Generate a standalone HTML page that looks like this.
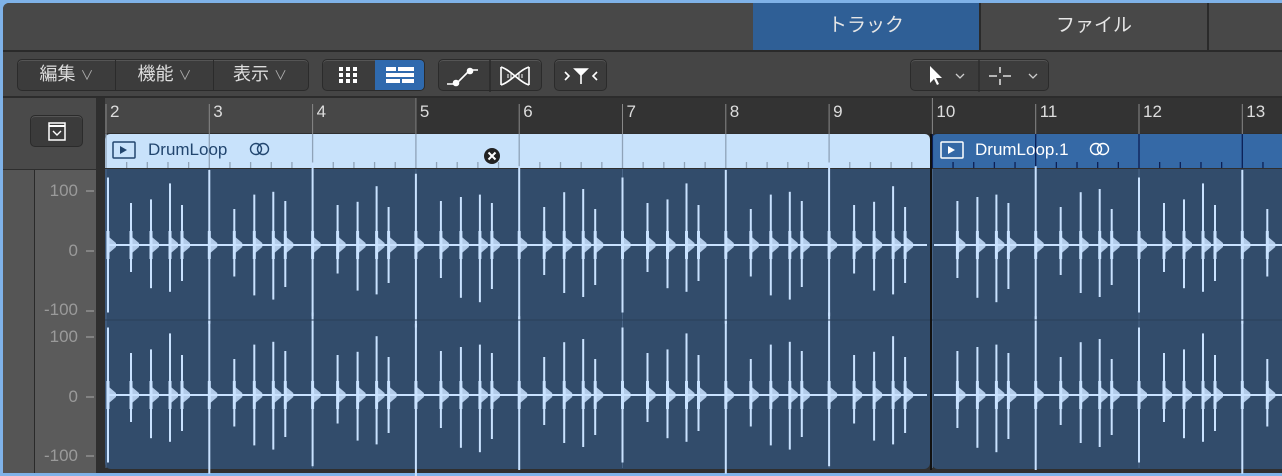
<!DOCTYPE html>
<html><head><meta charset="utf-8"><style>
*{margin:0;padding:0;box-sizing:border-box}
body{width:1282px;height:476px;background:#7fb2e8;overflow:hidden;position:relative;font-family:"Liberation Sans","Noto Sans CJK JP",sans-serif}
.a{position:absolute}
.frame{left:3px;top:3px;width:1279px;height:470px;background:#464646;border-radius:6px 0 0 6px;overflow:hidden}
.tab{top:3px;height:47px;color:#e6e6e6;font-size:19px;text-align:center;line-height:46px;border-right:2px solid #2a2a2a}
.btn{background:#3c3c3c;border:1px solid #2b2b2b;border-radius:5px;color:#ddd;font-size:18px;box-shadow:0 1px 0 #555 inset}
.seg{display:inline-block;height:100%;text-align:center;line-height:29px;border-right:1px solid #2b2b2b}
.lab{color:#9a9a9a;font-size:17px;text-align:right;width:44px}
</style></head><body>
<div class="a frame"></div>
<div class="a" style="left:3px;top:3px;width:1279px;height:47px;background:#484848;border-radius:6px 0 0 0"></div>
<div class="a tab" style="left:753px;width:228px;background:#2f5f96">トラック</div>
<div class="a tab" style="left:981px;width:228px;background:#484848">ファイル</div>
<div class="a" style="left:3px;top:50px;width:1279px;height:2px;background:#2a2a2a"></div>
<div class="a" style="left:3px;top:52px;width:1279px;height:45px;background:#454545"></div>
<div class="a btn" style="left:17px;top:59px;width:292px;height:32px">
 <span class="seg" style="width:98px">編集 <small style="font-size:13px;color:#aaa">∨</small></span><span class="seg" style="width:98px">機能 <small style="font-size:13px;color:#aaa">∨</small></span><span class="seg" style="width:92px;border:none">表示 <small style="font-size:13px;color:#aaa">∨</small></span></div>
<div class="a btn" style="left:322px;top:59px;width:103px;height:32px;overflow:hidden">
 <svg class="a" style="left:16px;top:7px" width="20" height="18"><g fill="#fff"><rect x="0" y="0" width="4" height="4"/><rect x="7" y="0" width="4" height="4"/><rect x="14" y="0" width="4" height="4"/><rect x="0" y="6" width="4" height="4"/><rect x="7" y="6" width="4" height="4"/><rect x="14" y="6" width="4" height="4"/><rect x="0" y="12" width="4" height="4"/><rect x="7" y="12" width="4" height="4"/><rect x="14" y="12" width="4" height="4"/></g></svg>
 <div class="a" style="left:52px;top:0;width:51px;height:32px;background:#2f6aae"></div>
 <svg class="a" style="left:63px;top:7px" width="30" height="18"><g fill="#fff"><rect x="0" y="0" width="10" height="4"/><rect x="12" y="0" width="16" height="4"/><rect x="0" y="6" width="28" height="4"/><rect x="0" y="12" width="14" height="4"/><rect x="16" y="12" width="12" height="4"/></g></svg>
</div>
<div class="a btn" style="left:438px;top:59px;width:104px;height:32px">
 <svg class="a" style="left:0;top:0" width="104" height="32"><g stroke="#fff" stroke-width="1.6" fill="none"><path d="M8 24h7M19 22l10-10M33 10h6"/><circle cx="17" cy="23" r="2.5" fill="#fff"/><circle cx="31" cy="11" r="2.5" fill="#fff"/><path d="M51 0v32" stroke="#2b2b2b"/><path d="M62 7v18M90 7v18M62 7c10 3 18 15 28 18M62 25c10-3 18-15 28-18"/><path d="M69 14v4M72 12v8M80 12v8M83 14v4" stroke-width="1"/></g></svg>
</div>
<div class="a btn" style="left:554px;top:59px;width:53px;height:32px">
 <svg class="a" style="left:0;top:0" width="53" height="32"><g stroke="#fff" stroke-width="1.6" fill="none"><path d="M10 12l4 4-4 4M42 12l-4 4 4 4M26 13v11"/><path d="M20 9h12l-6 6z" fill="#fff"/></g></svg>
</div>
<div class="a btn" style="left:910px;top:59px;width:139px;height:32px">
 <svg class="a" style="left:0;top:0" width="139" height="32"><path d="M19 6v17l4-4 3 6 2-1-3-6h6z" fill="#fff"/><g stroke="#ccc" stroke-width="1.3" fill="none"><path d="M45 14l4 4 4-4M118 14l4 4 4-4"/><path d="M68 0v32" stroke="#2b2b2b"/><path d="M78 16h8M92 16h8M89 7v6M89 19v6" stroke="#fff"/></g></svg>
</div>
<div class="a" style="left:3px;top:96px;width:1279px;height:2px;background:#2c2c2c"></div>
<div class="a" style="left:3px;top:98px;width:94px;height:72px;background:#4a4a4a"></div>
<div class="a btn" style="left:30px;top:115px;width:53px;height:32px;background:#3b3b3b">
 <svg class="a" style="left:17px;top:6px" width="18" height="19"><rect x="1" y="1" width="16" height="17" fill="none" stroke="#fff" stroke-width="1.5"/><path d="M1 4h16" stroke="#fff" stroke-width="2"/><path d="M5 9l4 4 4-4" stroke="#fff" stroke-width="1.4" fill="none"/></svg>
</div>
<div class="a" style="left:3px;top:169px;width:94px;height:1px;background:#2e2e2e"></div>
<div class="a" style="left:3px;top:170px;width:31px;height:303px;background:#555"></div>
<div class="a" style="left:34px;top:170px;width:1px;height:303px;background:#2a2a2a"></div>
<div class="a" style="left:35px;top:170px;width:62px;height:303px;background:#5b5b5b"></div>
<div class="a" style="left:96px;top:98px;width:9px;height:375px;background:#2f2f2f"></div>
<div class="a lab" style="left:34px;top:181px">100</div>
<div class="a lab" style="left:34px;top:241px">0</div>
<div class="a lab" style="left:34px;top:300px">-100</div>
<div class="a lab" style="left:34px;top:327px">100</div>
<div class="a lab" style="left:34px;top:387px">0</div>
<div class="a lab" style="left:34px;top:446px">-100</div>
<svg class="a" style="left:86px;top:170px" width="10" height="300"><g stroke="#9a9a9a" stroke-width="1.3"><path d="M0 21h8M0 81h8M0 141h8M0 167h8M0 227h8M0 286h8"/></g></svg>
<div class="a" style="left:105px;top:98px;width:310px;height:35px;background:#474747"></div>
<div class="a" style="left:415px;top:98px;width:867px;height:35px;background:#333"></div>
<div class="a" style="left:105px;top:133px;width:1177px;height:340px;background:#2f2f2f"></div>
<svg id="rul" class="a" style="left:0;top:98px" width="1282" height="36"></svg>
<div class="a" style="left:105px;top:134px;width:825px;height:34px;background:#c8e2fb;border-radius:5px 5px 0 0"></div>
<div class="a" style="left:932px;top:134px;width:350px;height:34px;background:#3569a6;border-radius:5px 0 0 0"></div>
<div class="a" style="left:105px;top:169px;width:825px;height:300px;background:#324c6b;border-radius:0 0 6px 6px"></div>
<div class="a" style="left:932px;top:169px;width:350px;height:300px;background:#324c6b;border-radius:0 0 0 6px"></div>
<svg id="wav" class="a" style="left:0;top:0" width="1282" height="476"></svg>
<div class="a" style="left:148px;top:140px;font-size:17px;color:#22466f">DrumLoop</div>
<div class="a" style="left:975px;top:140px;font-size:17px;color:#fff">DrumLoop.1</div>
<svg class="a" style="left:0;top:0" width="1282" height="170">
 <rect x="113" y="142" width="22" height="16" rx="1" fill="none" stroke="#22466f" stroke-width="1.5"/><path d="M120 146l7 4-7 4z" fill="#22466f"/>
 <g fill="none" stroke="#22466f" stroke-width="1.4"><circle cx="256" cy="149" r="5.5"/><circle cx="263" cy="149" r="5.5"/></g>
 <rect x="941" y="142" width="22" height="16" rx="1" fill="none" stroke="#fff" stroke-width="1.5"/><path d="M948 146l7 4-7 4z" fill="#fff"/>
 <g fill="none" stroke="#fff" stroke-width="1.4"><circle cx="1096" cy="149" r="5.5"/><circle cx="1103" cy="149" r="5.5"/></g>
 <circle cx="492" cy="156" r="8" fill="#222"/><path d="M488.5 152.5l7 7M495.5 152.5l-7 7" stroke="#fff" stroke-width="2"/>
</svg>
<script>
var bw=103.3,x0=106,r='',w='';
for(var i=0;i<12;i++){var x=x0+i*bw;
 r+='<line x1="'+x+'" y1="'+(i==3||i==8?0:6)+'" x2="'+x+'" y2="36" stroke="#888" stroke-width="1"/>';
 r+='<text x="'+(x+4)+'" y="19" fill="#ddd" font-size="17" font-family="Liberation Sans">'+(i+2)+'</text>';
 var lc=x<930?'#8fa3b8':'#0b1f55';
 w+='<line x1="'+x+'" y1="134" x2="'+x+'" y2="168" stroke="'+lc+'" stroke-width="1.3"/>';
 for(var k=1;k<5;k++){var tx=x+k*bw/5;w+='<line x1="'+tx+'" y1="162" x2="'+tx+'" y2="168" stroke="'+lc+'" stroke-width="1.3"/>';}
 w+='<line x1="'+x+'" y1="169" x2="'+x+'" y2="468" stroke="#4a6688" stroke-width="1"/>';
}
document.getElementById('rul').innerHTML=r;
var pat=[[0,75,75],[25,40,30],[45,48,48],[64,56,52],[76,40,40]];
var cs=[245,395];
for(var i=0;i<12;i++){var bx=x0+i*bw;
 for(var j=0;j<pat.length;j++){var p=pat[j],x=bx+p[0];
  if(x<107)x=108; if((x>926&&x<934)||x>1280)continue;
  var up=p[1]*(0.9+0.2*((i*7+j*3)%5)/4),dn=p[2]*(0.9+0.2*((i*3+j*5)%5)/4);
  for(var c=0;c<2;c++){var cy=cs[c];
   w+='<rect x="'+(x-1)+'" y="'+(cy-up)+'" width="2" height="'+(up+dn)+'" fill="#c9e2ff"/>';
   w+='<rect x="'+(x-1.5)+'" y="'+(cy-14)+'" width="3" height="28" fill="#c9e2ff"/>';
   w+='<path d="M'+(x+1)+' '+(cy-8)+'L'+(x+8)+' '+(cy-2)+'L'+(x+8)+' '+(cy+2)+'L'+(x+1)+' '+(cy+8)+'z" fill="#c9e2ff" opacity="0.85"/>';}
 }}
for(var c=0;c<2;c++){w+='<rect x="107" y="'+(cs[c]-1)+'" width="820" height="2" fill="#c9e2ff"/><rect x="934" y="'+(cs[c]-1)+'" width="348" height="2" fill="#c9e2ff"/>';}
w+='<line x1="105" y1="320" x2="1282" y2="320" stroke="#2a3f58" stroke-width="1"/>';
w+='<line x1="931" y1="134" x2="931" y2="470" stroke="#111" stroke-width="2"/>';
document.getElementById('wav').innerHTML=w;
</script>
</body></html>
